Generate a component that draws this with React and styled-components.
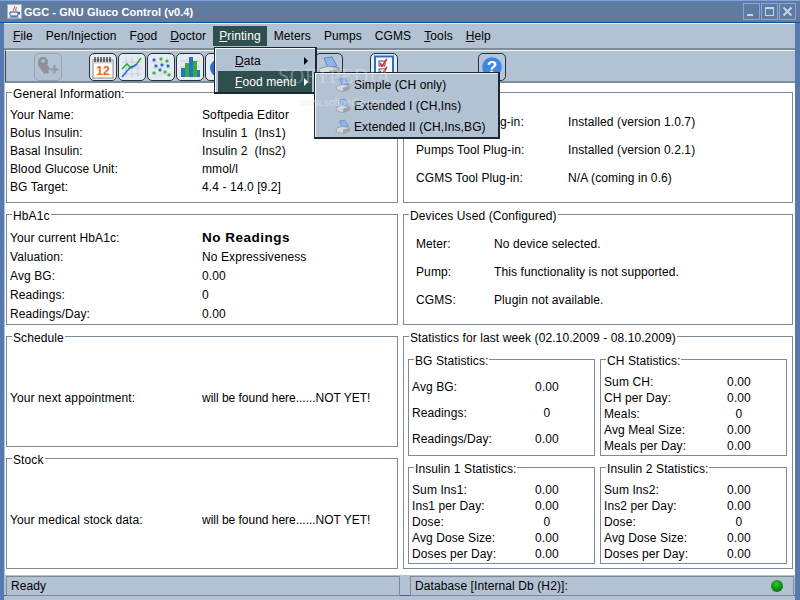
import React from "react";
import styled, {createGlobalStyle} from "styled-components";

const GlobalStyle = createGlobalStyle`
  html, body {
    margin: 0;
    padding: 0;
    background: #5679b0;
  }
  body {
    font-family: "Liberation Sans", Arial, sans-serif;
    font-size: 12px;
    color: #000;
  }
`;

const Frame = styled.div`
  position: relative;
  width: 800px;
  height: 600px;
  overflow: hidden;
  display: flex;
  flex-direction: column;
  background: #5679b0;
  border-top: 1px solid #7fa2e0;
  box-sizing: border-box;
`;

const TitleBar = styled.div`
  height: 21px;
  display: flex;
  align-items: center;
  gap: 2px;
  padding: 0 4px 0 7px;
  background: #5f7ba0;
  border-bottom: 1px solid #0a4ea0;
  color: #fff;
  font-size: 11px;
  font-weight: bold;
  letter-spacing: 0.06px;
  flex: none;
`;

const TitleText = styled.span`
  flex: 1;
`;

const WinButtons = styled.div`
  display: flex;
  gap: 1px;
`;

const WinButton = styled.div`
  width: 15px;
  height: 15px;
  border: 1px solid #86a6e0;
  display: flex;
  align-items: center;
  justify-content: center;
`;

const Body = styled.div`
  flex: 1;
  margin: 0 5px 0 4px;
  display: flex;
  flex-direction: column;
  background: #b2c2d2;
  min-height: 0;
`;

const MenuBar = styled.div`
  height: 27px;
  flex: none;
  display: flex;
  align-items: center;
  padding-left: 2.5px;
  box-sizing: border-box;
  border-top: 1px solid #e8eef4;
  border-bottom: 2px solid #7f8c9a;
`;

const MenuItem = styled.div`
  height: 20px;
  line-height: 20px;
  padding: 0 6.5px;
  letter-spacing: 0.1px;
  background: ${(p) => (p.$active ? "#2f4f4f" : "transparent")};
  color: ${(p) => (p.$active ? "#fff" : "#000")};
`;

const Key = styled.span`
  text-decoration: underline;
`;

const Toolbar = styled.div`
  height: 33px;
  flex: none;
  margin-left: 1px;
  display: flex;
  align-items: center;
  padding: 2px 0 0 28px;
  box-sizing: border-box;
  border-left: 1px solid #39444f;
  border-top: 1px solid #f2f5f8;
  border-bottom: 2px solid #7f8c9a;
`;

const ToolButton = styled.div`
  width: 28px;
  height: 28px;
  flex: none;
  box-sizing: border-box;
  margin-left: ${(p) => p.$gap || 0}px;
  display: flex;
  align-items: center;
  justify-content: center;
  border: 1px solid ${(p) => (p.$disabled ? "#98a5b2" : "#26323e")};
  border-radius: 5px;
  background: ${(p) => (p.$disabled ? "#b2c2d2" : p.$plain ? "#b8c7d6" : "#e4ebf2")};
`;

const Content = styled.div`
  flex: 1;
  min-height: 0;
  margin-left: 1px;
  background: #fff;
  display: grid;
  grid-template-columns: 392px 390px;
  grid-template-rows: 120px 120px 120px 120px;
  column-gap: 5px;
  row-gap: 2px;
  padding: 0 0 0 1px;
  box-sizing: border-box;
`;

const Panel = styled.fieldset`
  margin: 0;
  padding: 0;
  min-width: 0;
  box-sizing: border-box;
  border: 1px solid #7f8a96;
  grid-row: ${(p) => p.$rows || "auto"};
  letter-spacing: 0.1px;
`;

// the text sits a little under the border line, as a Java titled border does
const Legend = styled.legend`
  padding: 4px 1px 0;
  margin-left: 5px;
  line-height: 14px;
  font-size: 12px;
`;

const Rows = styled.div`
  padding-top: ${(p) => p.$top}px;
  padding-left: ${(p) => p.$left}px;
`;

const Row = styled.div`
  display: grid;
  grid-template-columns: ${(p) => p.$label}px 1fr;
  height: ${(p) => p.$height}px;
  align-items: center;
  white-space: pre;
`;

const StatGrid = styled.div`
  display: grid;
  grid-template-columns: 187px 187px;
  grid-template-rows: 106px 106px;
  column-gap: 5px;
  row-gap: 2px;
  padding: 5px 0 0 4px;
`;

const StatRow = styled.div`
  display: grid;
  grid-template-columns: 112px 46px;
  height: ${(p) => p.$height}px;
  align-items: center;
`;

const StatValue = styled.span`
  text-align: center;
`;

const Strong = styled.span`
  font-size: 13.5px;
  font-weight: bold;
  letter-spacing: 0.5px;
`;

const Note = styled.span`
  letter-spacing: -0.02px;
`;

const StatusBar = styled.div`
  height: 21px;
  flex: none;
  display: grid;
  grid-template-columns: 394px 384px;
  column-gap: 10px;
  padding: 1px 0 0 2px;
  margin-bottom: 4px;
  box-sizing: border-box;
  border-bottom: 1px solid #3c5f96;
`;

const StatusCell = styled.div`
  display: flex;
  align-items: center;
  justify-content: space-between;
  padding: 0 10px 0 4px;
  border: 1px solid #7f8a96;
  letter-spacing: 0.1px;
  height: 18px;
`;

const Led = styled.div`
  width: 12px;
  height: 12px;
  border-radius: 50%;
  background: radial-gradient(circle at 45% 35%, #35c035, #0a8a0a 60%, #065c06);
`;

const Popup = styled.div`
  position: absolute;
  left: ${(p) => p.$left}px;
  top: ${(p) => p.$top}px;
  width: ${(p) => p.$width}px;
  box-sizing: border-box;
  padding: ${(p) => p.$padTop}px 3px 0;
  background: #b2c2d2;
  border: 1px solid #1d2733;
  border-right-width: 2px;
  border-bottom-width: 2px;
  box-shadow: inset 1px 1px 0 #f4f7fa;
  letter-spacing: 0.1px;
  z-index: 2;
`;

const PopupItem = styled.div`
  display: flex;
  align-items: center;
  height: 21px;
  white-space: nowrap;
  padding: ${(p) => p.$pad};
  background: ${(p) => (p.$active ? "#2f4f4f" : "transparent")};
  color: ${(p) => (p.$active ? "#fff" : "#000")};
  gap: 3px;
`;

const Arrow = styled.span`
  margin-left: auto;
  margin-right: 4px;
  border-left: 4px solid ${(p) => (p.$active ? "#fff" : "#000")};
  border-top: 4px solid transparent;
  border-bottom: 4px solid transparent;
`;

const Watermark = styled.div`
  position: absolute;
  left: 278px;
  top: 64px;
  z-index: 3;
  font-family: "Liberation Serif", serif;
  font-size: 20px;
  letter-spacing: 0.6px;
  color: rgba(255, 255, 255, 0.3);
  pointer-events: none;
`;

const WatermarkUrl = styled.div`
  position: absolute;
  left: 300px;
  top: 96px;
  z-index: 3;
  font-size: 10px;
  color: rgba(225, 232, 240, 0.6);
  pointer-events: none;
`;

const JavaIcon = () => (
  <svg width="15" height="15" viewBox="0 0 15 15">
    <rect x="0.5" y="0.5" width="14" height="14" fill="#eef1f5" stroke="#9fb0c4" />
    <path d="M7 2c2 1.5-2 3 0 5M9 3c1 1-1 2 0 4" stroke="#d8401c" strokeWidth="1" fill="none" />
    <path d="M3 8h8v2.5c0 1-1 1.5-2 1.5H5c-1 0-2-.5-2-1.5zM11 8.5h1.5v1.5H11M2.5 13h9" stroke="#2b4f9c" strokeWidth="1" fill="none" />
  </svg>
);

const MinIcon = () => (
  <svg width="11" height="11" viewBox="0 0 11 11">
    <rect x="1" y="8" width="6" height="2" fill="#c4d4ee" />
  </svg>
);

const MaxIcon = () => (
  <svg width="11" height="11" viewBox="0 0 11 11">
    <rect x="1.5" y="1.5" width="8" height="8" fill="none" stroke="#c4d4ee" />
    <rect x="1" y="1" width="9" height="2" fill="#c4d4ee" />
  </svg>
);

const CloseIcon = () => (
  <svg width="11" height="11" viewBox="0 0 11 11">
    <path d="M1.5 1.5l8 8M9.5 1.5l-8 8" stroke="#c4d4ee" strokeWidth="2" />
  </svg>
);

const KeyIcon = () => (
  <svg width="26" height="24" viewBox="0 0 26 24">
    <path d="M3 7c0-3 2-5 5-5s5 2 5 5c0 1-.3 2-.8 3l3.3 4-2.5 2 1 1.5-2 1.6-1-1.4-1.5 1.2-4.700-6C3.500 12 3 10 3 7z" fill="#8d9399" />
    <path d="M15 13h3v-3h3v3h3v3h-3v3h-3v-3h-3z" fill="#989ea4" stroke="#b8bec4" strokeWidth="0.5" />
    <circle cx="8" cy="6" r="1.8" fill="#b2c2d2" />
  </svg>
);

const CalendarIcon = () => (
  <svg width="24" height="24" viewBox="0 0 24 24">
    <rect x="2" y="5" width="20" height="18" fill="#fff" stroke="#8a8a8a" />
    <rect x="2.500" y="5.500" width="19" height="3" fill="#d0d0d0" />
    <path d="M4 2v5M7 2v5M10 2v5M13 2v5M16 2v5M19 2v5" stroke="#222" strokeWidth="1.2" />
    <text x="12" y="20" textAnchor="middle" fontSize="12" fontWeight="bold" fill="#f0641e" fontFamily="Liberation Sans">12</text>
  </svg>
);

const LineChartIcon = () => (
  <svg width="24" height="24" viewBox="0 0 24 24">
    <path d="M6 2v20M12 2v20M18 2v20M2 7h20M2 13h20M2 19h20" stroke="#c6d0dc" strokeWidth="1" />
    <path d="M2 14l5-5 4 4 5-3 5-7" stroke="#35b035" strokeWidth="1.6" fill="none" />
    <path d="M2 22l5-6 4-4 3-1 3-2" stroke="#2b6fd0" strokeWidth="1.6" fill="none" />
  </svg>
);

const ScatterIcon = () => {
  const dots = [
    [5, 5, "#2a6fd0"], [12, 4, "#45b045"], [18, 6, "#45b045"], [7, 11, "#2a6fd0"], [13, 10, "#2a6fd0"],
    [19, 11, "#2a6fd0"], [5, 18, "#45b045"], [11, 15, "#2a6fd0"], [16, 17, "#45b045"], [20, 20, "#45b045"],
  ];
  return (
    <svg width="24" height="24" viewBox="0 0 24 24">
      <path d="M6 2v20M12 2v20M18 2v20M2 7h20M2 13h20M2 19h20" stroke="#d6dde6" strokeWidth="1" />
      {dots.map(([x, y, c]) => (
        <rect key={x + "-" + y} x={x - 1.5} y={y - 1.5} width="3" height="3" rx="1" fill={c} />
      ))}
    </svg>
  );
};

const BarsIcon = () => (
  <svg width="24" height="24" viewBox="0 0 24 24">
    <path d="M2 6h20M2 12h20M2 18h20" stroke="#c6d0dc" strokeWidth="1" />
    <rect x="3" y="13" width="4" height="9" fill="#2a6fd0" />
    <rect x="7" y="8" width="4" height="14" fill="#35b035" />
    <rect x="11" y="2" width="4" height="20" fill="#2a6fd0" />
    <rect x="15" y="6" width="4" height="16" fill="#35b035" />
    <rect x="19" y="15" width="3" height="7" fill="#2a6fd0" />
  </svg>
);

const PieIcon = () => (
  <svg width="24" height="24" viewBox="0 0 24 24">
    <circle cx="12" cy="13" r="9" fill="#2a6fd0" />
    <path d="M12 13V4a9 9 0 0 1 9 9z" fill="#35b035" />
  </svg>
);

const PrinterIcon = ({size = 24}) => (
  <svg width={size} height={size} viewBox="0 0 24 24">
    <path d="M7 3l8-1 5 9-9 2z" fill="#8fb4ea" stroke="#4a78c0" strokeWidth="0.8" />
    <path d="M2 14l9-3 11 2v5l-10 4-10-3z" fill="#d4d8dc" stroke="#7f868e" strokeWidth="0.8" />
    <path d="M12 16l10-3v5l-10 4z" fill="#9aa2aa" />
  </svg>
);

const ChecklistIcon = () => (
  <svg width="24" height="24" viewBox="0 0 24 24">
    <rect x="3" y="1.5" width="18" height="21" fill="#fff" stroke="#2a6fd0" strokeWidth="2" />
    <rect x="7" y="6" width="6" height="5" fill="none" stroke="#3a4a80" />
    <rect x="7" y="14" width="6" height="5" fill="none" stroke="#3a4a80" />
    <path d="M8 8l2 3 5-7M8 16l2 3 5-7" stroke="#e03020" strokeWidth="1.6" fill="none" />
  </svg>
);

const HelpIcon = () => (
  <svg width="24" height="24" viewBox="0 0 24 24">
    <circle cx="12" cy="12" r="10.5" fill="#3f86e0" stroke="#a9c6ee" strokeWidth="1.4" />
    <text x="12" y="18" textAnchor="middle" fontSize="17" fontWeight="bold" fill="#fff" fontFamily="Liberation Sans">?</text>
  </svg>
);

const general = [
  ["Your Name:", "Softpedia Editor"],
  ["Bolus Insulin:", "Insulin 1  (Ins1)"],
  ["Basal Insulin:", "Insulin 2  (Ins2)"],
  ["Blood Glucose Unit:", "mmol/l"],
  ["BG Target:", "4.4 - 14.0 [9.2]"],
];

const hba1c = [
  ["Your current HbA1c:", <Strong>No Readings</Strong>],
  ["Valuation:", "No Expressiveness"],
  ["Avg BG:", "0.00"],
  ["Readings:", "0"],
  ["Readings/Day:", "0.00"],
];

const plugins = [
  ["Meters Tool Plug-in:", "Installed (version 1.0.7)"],
  ["Pumps Tool Plug-in:", "Installed (version 0.2.1)"],
  ["CGMS Tool Plug-in:", "N/A (coming in 0.6)"],
];

const devices = [
  ["Meter:", "No device selected."],
  ["Pump:", "This functionality is not supported."],
  ["CGMS:", "Plugin not available."],
];

const statBoxes = [
  {title: "BG Statistics:", height: 26, rows: [["Avg BG:", "0.00"], ["Readings:", "0"], ["Readings/Day:", "0.00"]]},
  {
    title: "CH Statistics:",
    height: 16,
    rows: [["Sum CH:", "0.00"], ["CH per Day:", "0.00"], ["Meals:", "0"], ["Avg Meal Size:", "0.00"], ["Meals per Day:", "0.00"]],
  },
  {
    title: "Insulin 1 Statistics:",
    height: 16,
    rows: [["Sum Ins1:", "0.00"], ["Ins1 per Day:", "0.00"], ["Dose:", "0"], ["Avg Dose Size:", "0.00"], ["Doses per Day:", "0.00"]],
  },
  {
    title: "Insulin 2 Statistics:",
    height: 16,
    rows: [["Sum Ins2:", "0.00"], ["Ins2 per Day:", "0.00"], ["Dose:", "0"], ["Avg Dose Size:", "0.00"], ["Doses per Day:", "0.00"]],
  },
];

const InfoPanel = ({title, rows, label, height, top, left = 3}) => (
  <Panel>
    <Legend>{title}</Legend>
    <Rows $top={top} $left={left}>
      {rows.map(([name, value]) => (
        <Row key={name} $label={label} $height={height}>
          <span>{name}</span>
          <span>{value}</span>
        </Row>
      ))}
    </Rows>
  </Panel>
);

const foodItems = ["Simple (CH only)", "Extended I (CH,Ins)", "Extended II (CH,Ins,BG)"];

const App = () => (
  <Frame>
    <GlobalStyle/>
    <TitleBar>
      <JavaIcon/>
      <TitleText>GGC - GNU Gluco Control (v0.4)</TitleText>
      <WinButtons>
        <WinButton><MinIcon/></WinButton>
        <WinButton><MaxIcon/></WinButton>
        <WinButton><CloseIcon/></WinButton>
      </WinButtons>
    </TitleBar>
    <Body>
      <MenuBar>
        <MenuItem><Key>F</Key>ile</MenuItem>
        <MenuItem>Pen/Injection</MenuItem>
        <MenuItem>F<Key>o</Key>od</MenuItem>
        <MenuItem><Key>D</Key>octor</MenuItem>
        <MenuItem $active><Key>P</Key>rinting</MenuItem>
        <MenuItem>Meters</MenuItem>
        <MenuItem>Pumps</MenuItem>
        <MenuItem>CGMS</MenuItem>
        <MenuItem><Key>T</Key>ools</MenuItem>
        <MenuItem><Key>H</Key>elp</MenuItem>
      </MenuBar>
      <Toolbar>
        <ToolButton $disabled><KeyIcon/></ToolButton>
        <ToolButton $gap={27}><CalendarIcon/></ToolButton>
        <ToolButton $gap={1}><LineChartIcon/></ToolButton>
        <ToolButton $gap={1}><ScatterIcon/></ToolButton>
        <ToolButton $gap={1}><BarsIcon/></ToolButton>
        <ToolButton $gap={1}><PieIcon/></ToolButton>
        <ToolButton $gap={82} $plain><PrinterIcon/></ToolButton>
        <ToolButton $gap={27}><ChecklistIcon/></ToolButton>
        <ToolButton $gap={80} $plain><HelpIcon/></ToolButton>
      </Toolbar>
      <Content>
        <InfoPanel title="General Information:" rows={general} label={192} height={18} top={5}/>
        <InfoPanel title="Plugins:" rows={plugins} label={152} height={28} top={7} left={12}/>
        <InfoPanel title="HbA1c" rows={hba1c} label={192} height={19} top={5}/>
        <InfoPanel title="Devices Used (Configured)" rows={devices} label={78} height={28} top={7} left={12}/>
        <InfoPanel
          title="Schedule"
          rows={[["Your next appointment:", <Note>will be found here......NOT YET!</Note>]]}
          label={192}
          height={18}
          top={44}
        />
        <Panel $rows="span 2">
          <Legend>Statistics for last week (02.10.2009 - 08.10.2009)</Legend>
          <StatGrid>
            {statBoxes.map((box) => (
              <Panel key={box.title}>
                <Legend>{box.title}</Legend>
                <Rows $top={6} $left={3}>
                  {box.rows.map(([name, value]) => (
                    <StatRow key={name} $height={box.height}>
                      <span>{name}</span>
                      <StatValue>{value}</StatValue>
                    </StatRow>
                  ))}
                </Rows>
              </Panel>
            ))}
          </StatGrid>
        </Panel>
        <InfoPanel
          title="Stock"
          rows={[["Your medical stock data:", <Note>will be found here......NOT YET!</Note>]]}
          label={192}
          height={18}
          top={44}
        />
      </Content>
      <StatusBar>
        <StatusCell>Ready</StatusCell>
        <StatusCell>
          Database [Internal Db (H2)]:
          <Led/>
        </StatusCell>
      </StatusBar>
    </Body>

    <Popup $left={214} $top={46} $width={103} $padTop={2}>
      <PopupItem $pad="0 0 0 17px"><span><Key>D</Key>ata</span><Arrow/></PopupItem>
      <PopupItem $pad="0 0 0 17px" $active><span><Key>F</Key>ood menu</span><Arrow $active/></PopupItem>
    </Popup>
    <Popup $left={314} $top={71} $width={186} $padTop={1}>
      {foodItems.map((item) => (
        <PopupItem key={item} $pad="0 0 0 17px">
          <PrinterIcon size={16}/>
          <span>{item}</span>
        </PopupItem>
      ))}
    </Popup>
    <Watermark>SOFTPEDIA</Watermark>
    <WatermarkUrl>www.softpedia.com</WatermarkUrl>
  </Frame>
);

export default App;
